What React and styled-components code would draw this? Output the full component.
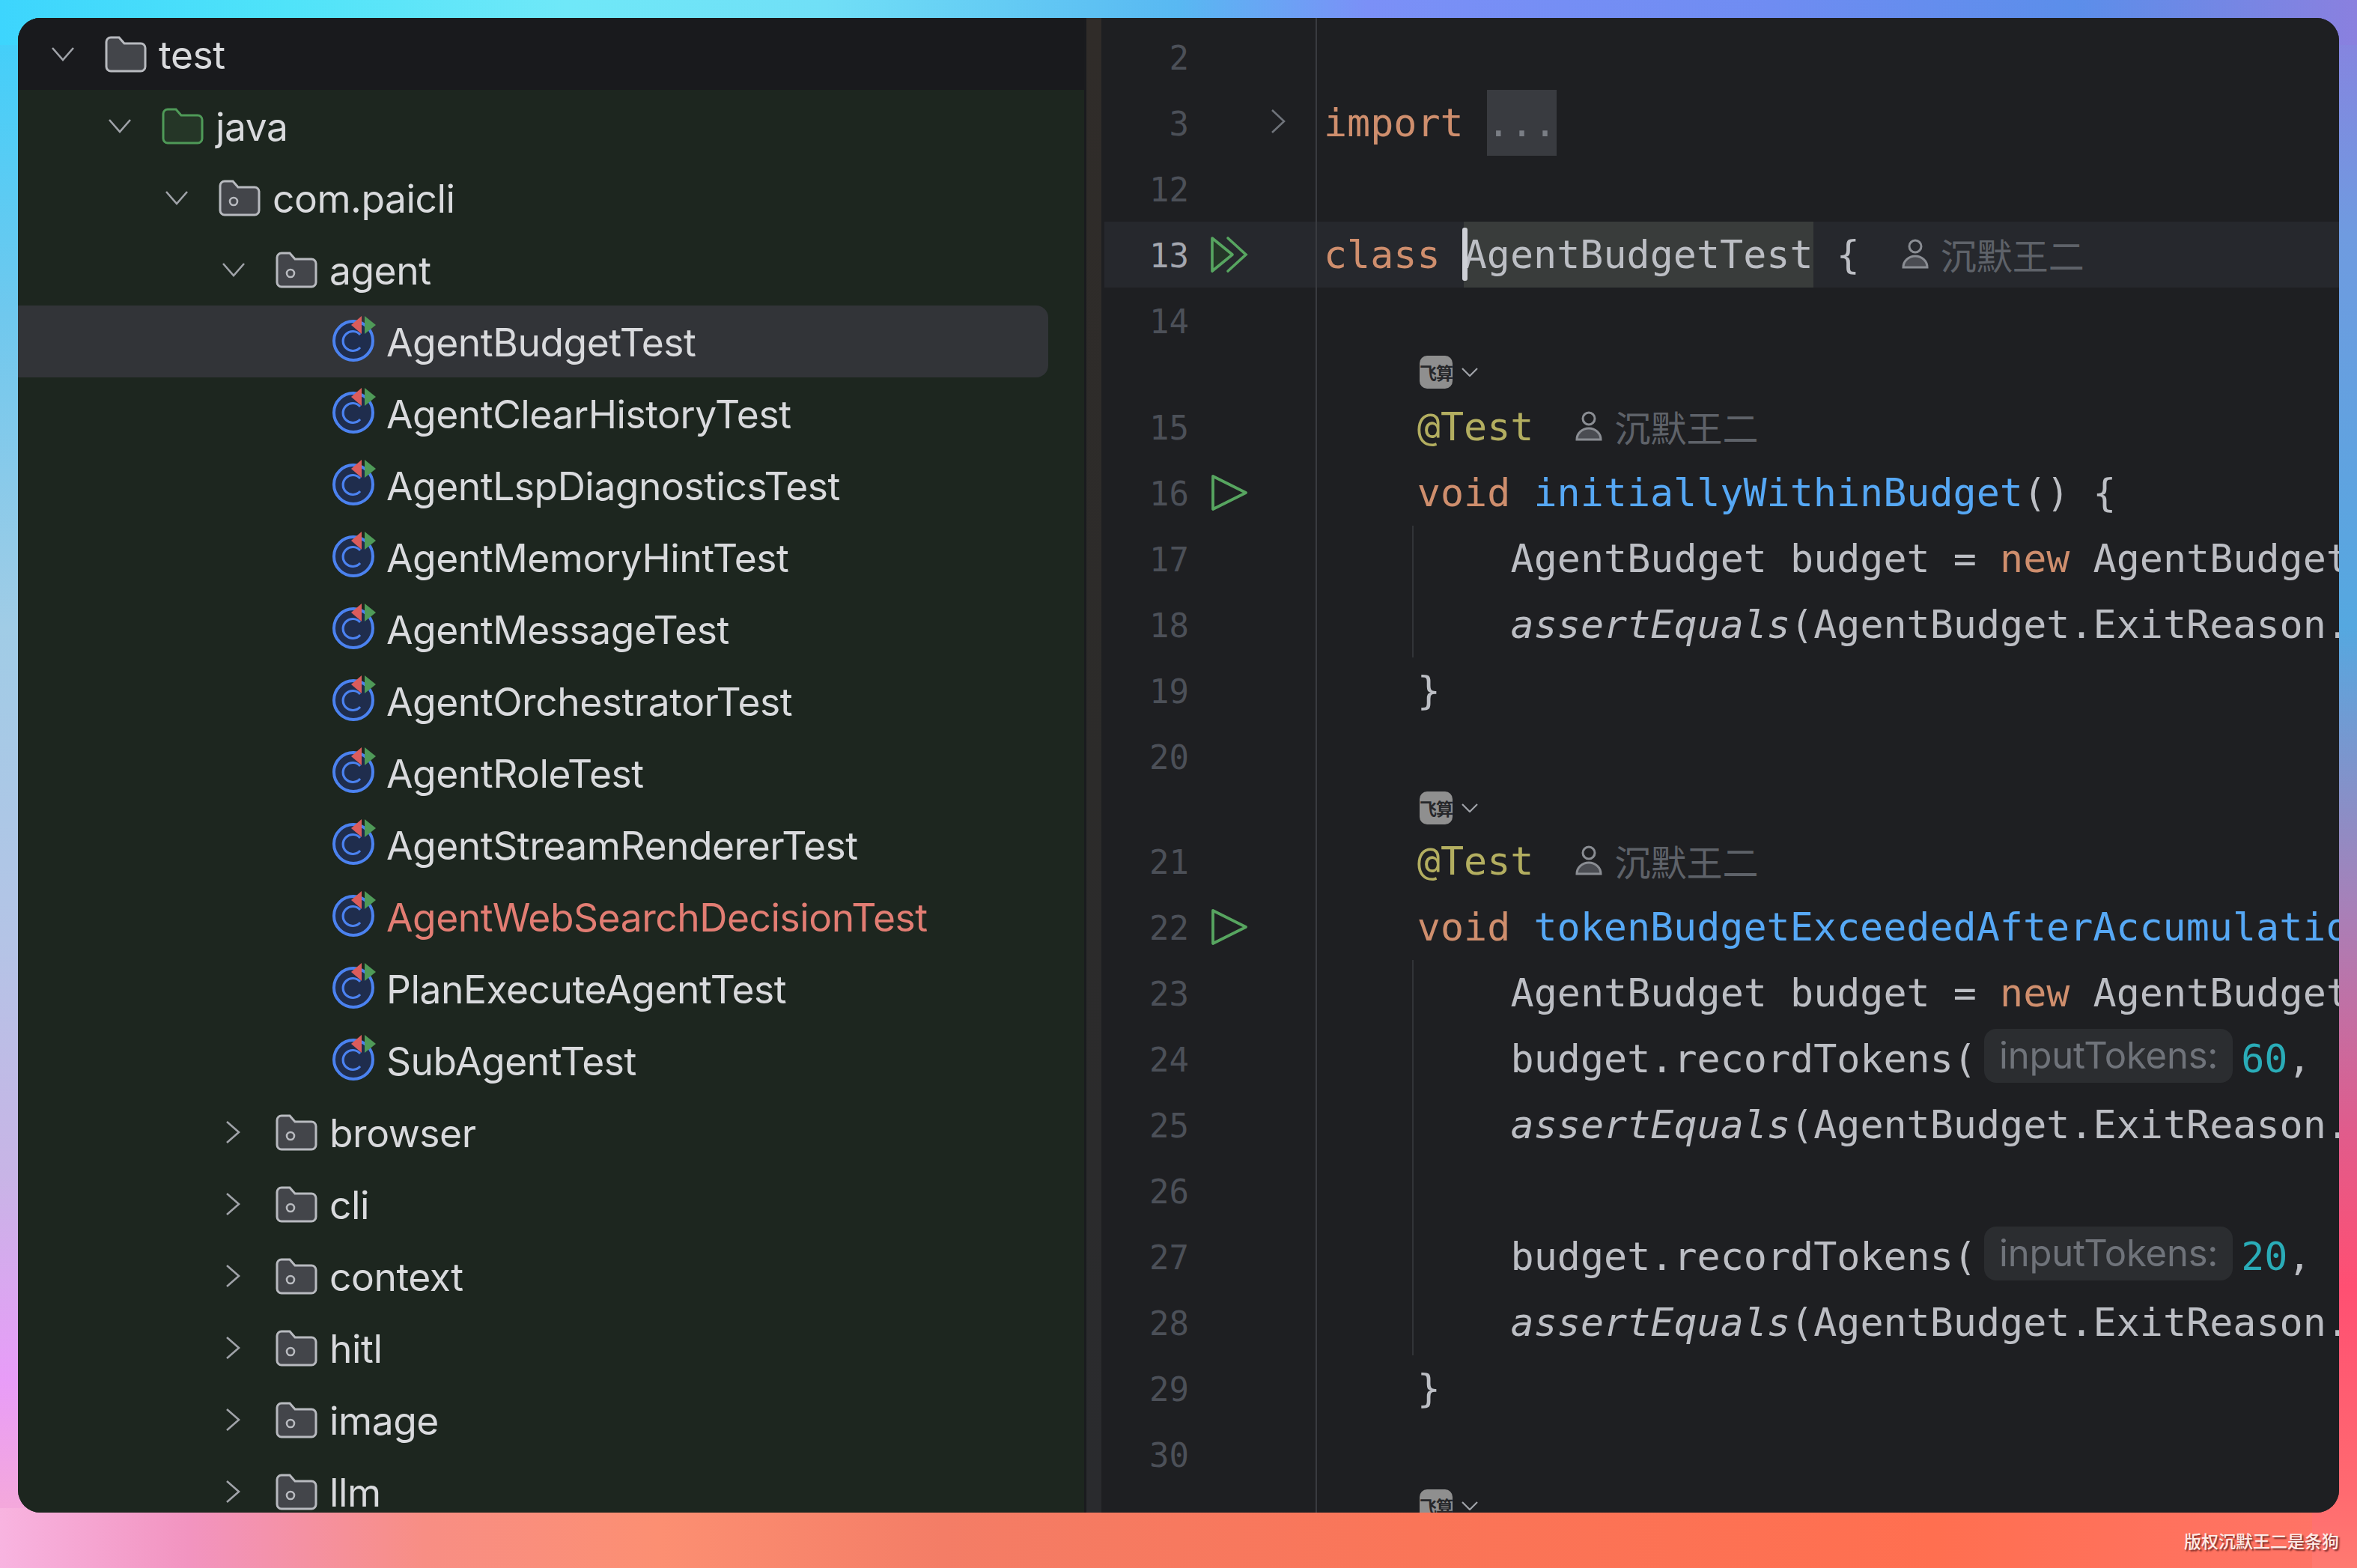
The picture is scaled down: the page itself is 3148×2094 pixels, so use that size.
import styled, { createGlobalStyle } from "styled-components";

const GlobalStyle = createGlobalStyle`
  html, body {
    margin: 0;
    padding: 0;
    background: #1e1f22;
  }
  * {
    box-sizing: border-box;
  }
`;

const MONO = `"DejaVu Sans Mono", "Noto Sans CJK SC", monospace`;
const UI = `Inter, "Noto Sans CJK SC", sans-serif`;

const Page = styled.div`
  position: relative;
  width: 3148px;
  height: 2094px;
  padding: 24px;
  overflow: hidden;
  background-repeat: no-repeat;
  background-image:
    linear-gradient(to right, #3dd5fd 0%, #4fe3f9 12%, #6fe8f8 24%, #70dff6 35%, #58b8f2 50%, #7b90f7 58%, #6f8cf2 75%, #5b8eea 88%, #8a80df 100%),
    linear-gradient(to bottom, #8a80df 0%, #6f9be0 15%, #55a8e0 40%, #a880b8 58%, #e05c8c 72%, #ff4f72 82%, #ff6a70 95%, #ff7a70 100%),
    linear-gradient(to right, #f8b4e0 0%, #f294c0 8%, #f88e84 18%, #fc8f72 28%, #f47d66 40%, #fa7558 60%, #ff6f50 82%, #ff7468 100%),
    linear-gradient(to bottom, #3dd0fb 0%, #6fc8ee 20%, #a0cce6 40%, #b4c4e6 60%, #c8b4e6 75%, #e89cf8 88%, #f4a8dc 96%, #f8b4e0 100%);
  background-size: 100% 60px, 60px 100%, 100% 80px, 60px 100%;
  background-position: top left, top right, bottom left, top left;
`;

const Watermark = styled.div`
  position: absolute;
  right: 24px;
  bottom: 22px;
  font: 500 23px/30px "Noto Sans CJK SC", sans-serif;
  color: #fdeae6;
  text-shadow: 2px 2px 2px rgba(60, 10, 10, 0.7);
`;

const Window = styled.div`
  display: flex;
  width: 3100px;
  height: 1996px;
  border-radius: 30px;
  overflow: hidden;
  background: #1e1f22;
`;

/* project tree */
const Tree = styled.div`
  display: flex;
  flex-direction: column;
  flex: 0 0 1424px;
  overflow: hidden;
  background: #1d261f;
`;

const Row = styled.div`
  display: flex;
  flex: 0 0 96px;
  align-items: center;
  height: 96px;
  padding-left: ${(p) => 40 + p.$level * 76}px;
  margin-right: ${(p) => (p.$selected ? 48 : 0)}px;
  border-radius: ${(p) => (p.$selected ? "0 16px 16px 0" : "0")};
  background: ${(p) => (p.$selected ? "#323438" : p.$root ? "#191a1d" : "transparent")};
`;

const ChevronSlot = styled.div`
  display: flex;
  flex: 0 0 40px;
  justify-content: center;
  margin-right: 36px;
`;

const ItemIcon = styled.div`
  display: flex;
  flex: 0 0 56px;
  margin-right: 16px;
`;

const ClassIconBox = styled.div`
  flex: 0 0 56px;
  width: 56px;
  min-width: 0;
  height: 66px;
  margin: -12px 16px 0 0;
`;

const Label = styled.span`
  padding-top: 2px;
  font: 400 51.5px/96px ${UI};
  white-space: pre;
  color: ${(p) => (p.$error ? "#e27d73" : "#d9dadd")};
  letter-spacing: -0.45px;
`;

/* thin strip between tree and editor */
const Splitter = styled.div`
  flex: 0 0 23px;
  border-left: 3px solid #1a1b1e;
  background: linear-gradient(to bottom, #302c29 0%, #2c2b2a 50%, #2a2b2e 100%);
`;

/* editor */
const Editor = styled.div`
  display: flex;
  flex-direction: column;
  flex: 1;
  min-width: 0;
  overflow: hidden;
  padding-left: 4px;
  background: #1e1f22;
`;

const Line = styled.div`
  display: flex;
  flex: 0 0 ${(p) => p.$height}px;
  height: ${(p) => p.$height}px;
  background: ${(p) => (p.$current ? "#26282d" : "transparent")};
`;

const Gutter = styled.div`
  display: grid;
  flex: 0 0 284px;
  grid-template-columns: 113px 110px 59px;
  align-items: center;
  border-right: 2px solid #393b40;
`;

const LineNo = styled.span`
  padding-top: 4px;
  font: 400 44px/84px ${MONO};
  text-align: right;
  color: ${(p) => (p.$current ? "#a4a7af" : "#4c5058")};
`;

const RunSlot = styled.div`
  display: flex;
  padding-left: 29px;
`;

const Code = styled.div`
  position: relative;
  flex: 1;
  min-width: 0;
  padding-left: ${(p) => 9 + (p.$indent || 0) * 31.2}px;
  font: 400 51.7px/88px ${MONO};
  white-space: pre;
  color: #bcbec4;
`;

const Guide = styled.div`
  position: absolute;
  top: 0;
  bottom: 0;
  left: 127px;
  width: 2px;
  background: #323438;
`;

const Keyword = styled.span`
  color: #cf8e6d;
`;
const Method = styled.span`
  color: #56a8f5;
`;
const Annotation = styled.span`
  color: #b3ae60;
`;
const NumberLit = styled.span`
  color: #2aacb8;
`;
const Static = styled.span`
  font-style: italic;
`;

const Folded = styled.span`
  display: inline-block;
  background: #393b40;
  color: #7a7e85;
`;

const Selected = styled.span`
  position: relative;
  display: inline-block;
  background: #393c3b;
`;

const Caret = styled.span`
  position: absolute;
  top: 8px;
  left: -2px;
  width: 7px;
  height: 71px;
  border-radius: 3px;
  background: #ced0d6;
`;

const Hint = styled.span`
  display: inline-block;
  height: 72px;
  margin: 0 11px 0 10px;
  padding: 0 20px;
  border-radius: 16px;
  font: 400 49px/72px ${UI};
  letter-spacing: -0.2px;
  vertical-align: top;
  transform: translateY(4px);
  background: #2b2d30;
  color: #6f737a;
`;

const Author = styled.span`
  display: inline-flex;
  align-items: center;
  height: 88px;
  padding-bottom: 2px;
  margin-left: 56px;
  vertical-align: top;
  font: 400 48px/86px "Noto Sans CJK SC", sans-serif;
  color: #5e6269;
`;

const AuthorIcon = styled.svg`
  width: 36px;
  height: 40px;
  margin-right: 16px;
`;

const PluginRow = styled.div`
  display: flex;
  align-items: center;
  gap: 12px;
  height: 50px;
  padding-left: 128px;
`;

const PluginBadge = styled.span`
  display: flex;
  flex: 0 0 44px;
  align-items: center;
  justify-content: center;
  height: 44px;
  border-radius: 10px;
  overflow: hidden;
  font: 700 23px/44px "Noto Sans CJK SC", sans-serif;
  letter-spacing: -1px;
  white-space: nowrap;
  background: #8f8f8f;
  color: #26272a;
`;

function Chevron({ open }) {
  return open ? (
    <svg width="32" height="20" viewBox="0 0 32 20">
      <path d="M2 2 L16 18 L30 2" fill="none" stroke="#a0a3a9" strokeWidth="2.6" />
    </svg>
  ) : (
    <svg width="20" height="32" viewBox="0 0 20 32">
      <path d="M1 2 L17 16 L1 30" fill="none" stroke="#a0a3a9" strokeWidth="2.6" />
    </svg>
  );
}

const FOLDER_PATH =
  "M8 2 H19 L26 10 H48 A6 6 0 0 1 54 16 V41 A6 6 0 0 1 48 47 H8 A6 6 0 0 1 2 41 V8 A6 6 0 0 1 8 2 Z";

function Folder({ kind }) {
  const green = kind === "source";
  return (
    <svg width="56" height="49" viewBox="0 0 56 49">
      <path
        d={FOLDER_PATH}
        fill={green ? "#253627" : "#43454a"}
        stroke={green ? "#4f9a58" : "#b8babf"}
        strokeWidth="3"
      />
      {kind === "package" && <circle cx="20" cy="29" r="5" fill="none" stroke="#b8babf" strokeWidth="2.6" />}
    </svg>
  );
}

function ClassIcon() {
  return (
    <ClassIconBox>
      <svg width="66" height="66" viewBox="0 0 66 66">
        <circle cx="28" cy="38" r="26" fill="#1f2d4d" stroke="#4b82f0" strokeWidth="4" />
        <path d="M37 30 A13 13 0 1 0 37 47" fill="none" stroke="#4b82f0" strokeWidth="3.2" />
        <path d="M25 17 L39 5 V29 Z" fill="#db5c5c" />
        <path d="M43 5 L58 17 L43 29 Z" fill="#4f9a58" />
      </svg>
    </ClassIconBox>
  );
}

function RunIcon({ double }) {
  return (
    <svg width="50" height="50" viewBox="0 0 50 50">
      {double ? (
        <>
          <path d="M2 3 L29 25 L2 47 Z" fill="#253627" stroke="#57a560" strokeWidth="3.6" strokeLinejoin="round" />
          <path d="M23 3 L47 25 L23 47" fill="none" stroke="#57a560" strokeWidth="3.6" strokeLinecap="round" />
        </>
      ) : (
        <path d="M3 3 L47 25 L3 47 Z" fill="none" stroke="#57a560" strokeWidth="3.8" strokeLinejoin="round" />
      )}
    </svg>
  );
}

function FoldIcon() {
  return (
    <svg width="20" height="32" viewBox="0 0 20 32">
      <path d="M1 1 L17 16 L1 31" fill="none" stroke="#6f737a" strokeWidth="2.6" />
    </svg>
  );
}

function AuthorTag() {
  return (
    <Author>
      <AuthorIcon viewBox="0 0 36 40">
        <circle cx="18" cy="10" r="8" fill="none" stroke="#8a8d93" strokeWidth="3" />
        <path d="M2 38 A16 15 0 0 1 34 38 Z" fill="#4a4c52" stroke="#8a8d93" strokeWidth="3" />
      </AuthorIcon>
      沉默王二
    </Author>
  );
}

function PluginHint() {
  return (
    <PluginRow>
      <PluginBadge>飞算</PluginBadge>
      <svg width="22" height="12" viewBox="0 0 22 12">
        <path d="M1 1 L11 11 L21 1" fill="none" stroke="#a0a3a9" strokeWidth="2.2" />
      </svg>
    </PluginRow>
  );
}

const folders = [
  { name: "test", level: 0, kind: "plain", open: true, root: true },
  { name: "java", level: 1, kind: "source", open: true },
  { name: "com.paicli", level: 2, kind: "package", open: true },
  { name: "agent", level: 3, kind: "package", open: true },
];

const classes = [
  "AgentBudgetTest",
  "AgentClearHistoryTest",
  "AgentLspDiagnosticsTest",
  "AgentMemoryHintTest",
  "AgentMessageTest",
  "AgentOrchestratorTest",
  "AgentRoleTest",
  "AgentStreamRendererTest",
  "AgentWebSearchDecisionTest",
  "PlanExecuteAgentTest",
  "SubAgentTest",
];

const packages = ["browser", "cli", "context", "hitl", "image", "llm"];

function ProjectTree() {
  return (
    <Tree>
      {folders.map((f) => (
        <Row key={f.name} $level={f.level} $root={f.root}>
          <ChevronSlot>
            <Chevron open={f.open} />
          </ChevronSlot>
          <ItemIcon>
            <Folder kind={f.kind} />
          </ItemIcon>
          <Label>{f.name}</Label>
        </Row>
      ))}
      {classes.map((name, i) => (
        <Row key={name} $level={4} $selected={i === 0}>
          <ChevronSlot />
          <ClassIcon />
          <Label $error={name === "AgentWebSearchDecisionTest"}>{name}</Label>
        </Row>
      ))}
      {packages.map((name) => (
        <Row key={name} $level={3}>
          <ChevronSlot>
            <Chevron />
          </ChevronSlot>
          <ItemIcon>
            <Folder kind="package" />
          </ItemIcon>
          <Label>{name}</Label>
        </Row>
      ))}
    </Tree>
  );
}

function CodeLine({ no, current, run, fold, indent, guide, children }) {
  return (
    <Line $height={88} $current={current}>
      <Gutter>
        <LineNo $current={current}>{no}</LineNo>
        <RunSlot>{run && <RunIcon double={run === "double"} />}</RunSlot>
        <div>{fold && <FoldIcon />}</div>
      </Gutter>
      <Code $indent={indent}>
        {guide && <Guide />}
        {children}
      </Code>
    </Line>
  );
}

function InlayLine({ height }) {
  return (
    <Line $height={height}>
      <Gutter />
      <Code>
        <PluginHint />
      </Code>
    </Line>
  );
}

export default function App() {
  return (
    <Page>
      <GlobalStyle />
      <Window>
        <ProjectTree />
        <Splitter />
        <Editor>
          <Line $height={8}>
            <Gutter />
          </Line>
          <CodeLine no="2" />
          <CodeLine no="3" fold>
            <Keyword>import</Keyword> <Folded>...</Folded>
          </CodeLine>
          <CodeLine no="12" />
          <CodeLine no="13" current run="double">
            <Keyword>class</Keyword>{" "}
            <Selected>
              <Caret />
              AgentBudgetTest
            </Selected>{" "}
            {"{"}
            <AuthorTag />
          </CodeLine>
          <CodeLine no="14" />
          <InlayLine height={54} />
          <CodeLine no="15" indent={4}>
            <Annotation>@Test</Annotation>
            <AuthorTag />
          </CodeLine>
          <CodeLine no="16" run="single" indent={4}>
            <Keyword>void</Keyword> <Method>initiallyWithinBudget</Method>() {"{"}
          </CodeLine>
          <CodeLine no="17" indent={8} guide>
            AgentBudget budget = <Keyword>new</Keyword> AgentBudget(
          </CodeLine>
          <CodeLine no="18" indent={8} guide>
            <Static>assertEquals</Static>(AgentBudget.ExitReason.NONE
          </CodeLine>
          <CodeLine no="19" indent={4}>
            {"}"}
          </CodeLine>
          <CodeLine no="20" />
          <InlayLine height={52} />
          <CodeLine no="21" indent={4}>
            <Annotation>@Test</Annotation>
            <AuthorTag />
          </CodeLine>
          <CodeLine no="22" run="single" indent={4}>
            <Keyword>void</Keyword> <Method>tokenBudgetExceededAfterAccumulation</Method>() {"{"}
          </CodeLine>
          <CodeLine no="23" indent={8} guide>
            AgentBudget budget = <Keyword>new</Keyword> AgentBudget(
          </CodeLine>
          <CodeLine no="24" indent={8} guide>
            budget.recordTokens(<Hint>inputTokens:</Hint>
            <NumberLit>60</NumberLit>,
          </CodeLine>
          <CodeLine no="25" indent={8} guide>
            <Static>assertEquals</Static>(AgentBudget.ExitReason.NONE
          </CodeLine>
          <CodeLine no="26" indent={8} guide />
          <CodeLine no="27" indent={8} guide>
            budget.recordTokens(<Hint>inputTokens:</Hint>
            <NumberLit>20</NumberLit>,
          </CodeLine>
          <CodeLine no="28" indent={8} guide>
            <Static>assertEquals</Static>(AgentBudget.ExitReason.NONE
          </CodeLine>
          <CodeLine no="29" indent={4}>
            {"}"}
          </CodeLine>
          <CodeLine no="30" />
          <InlayLine height={52} />
        </Editor>
      </Window>
      <Watermark>版权沉默王二是条狗</Watermark>
    </Page>
  );
}
